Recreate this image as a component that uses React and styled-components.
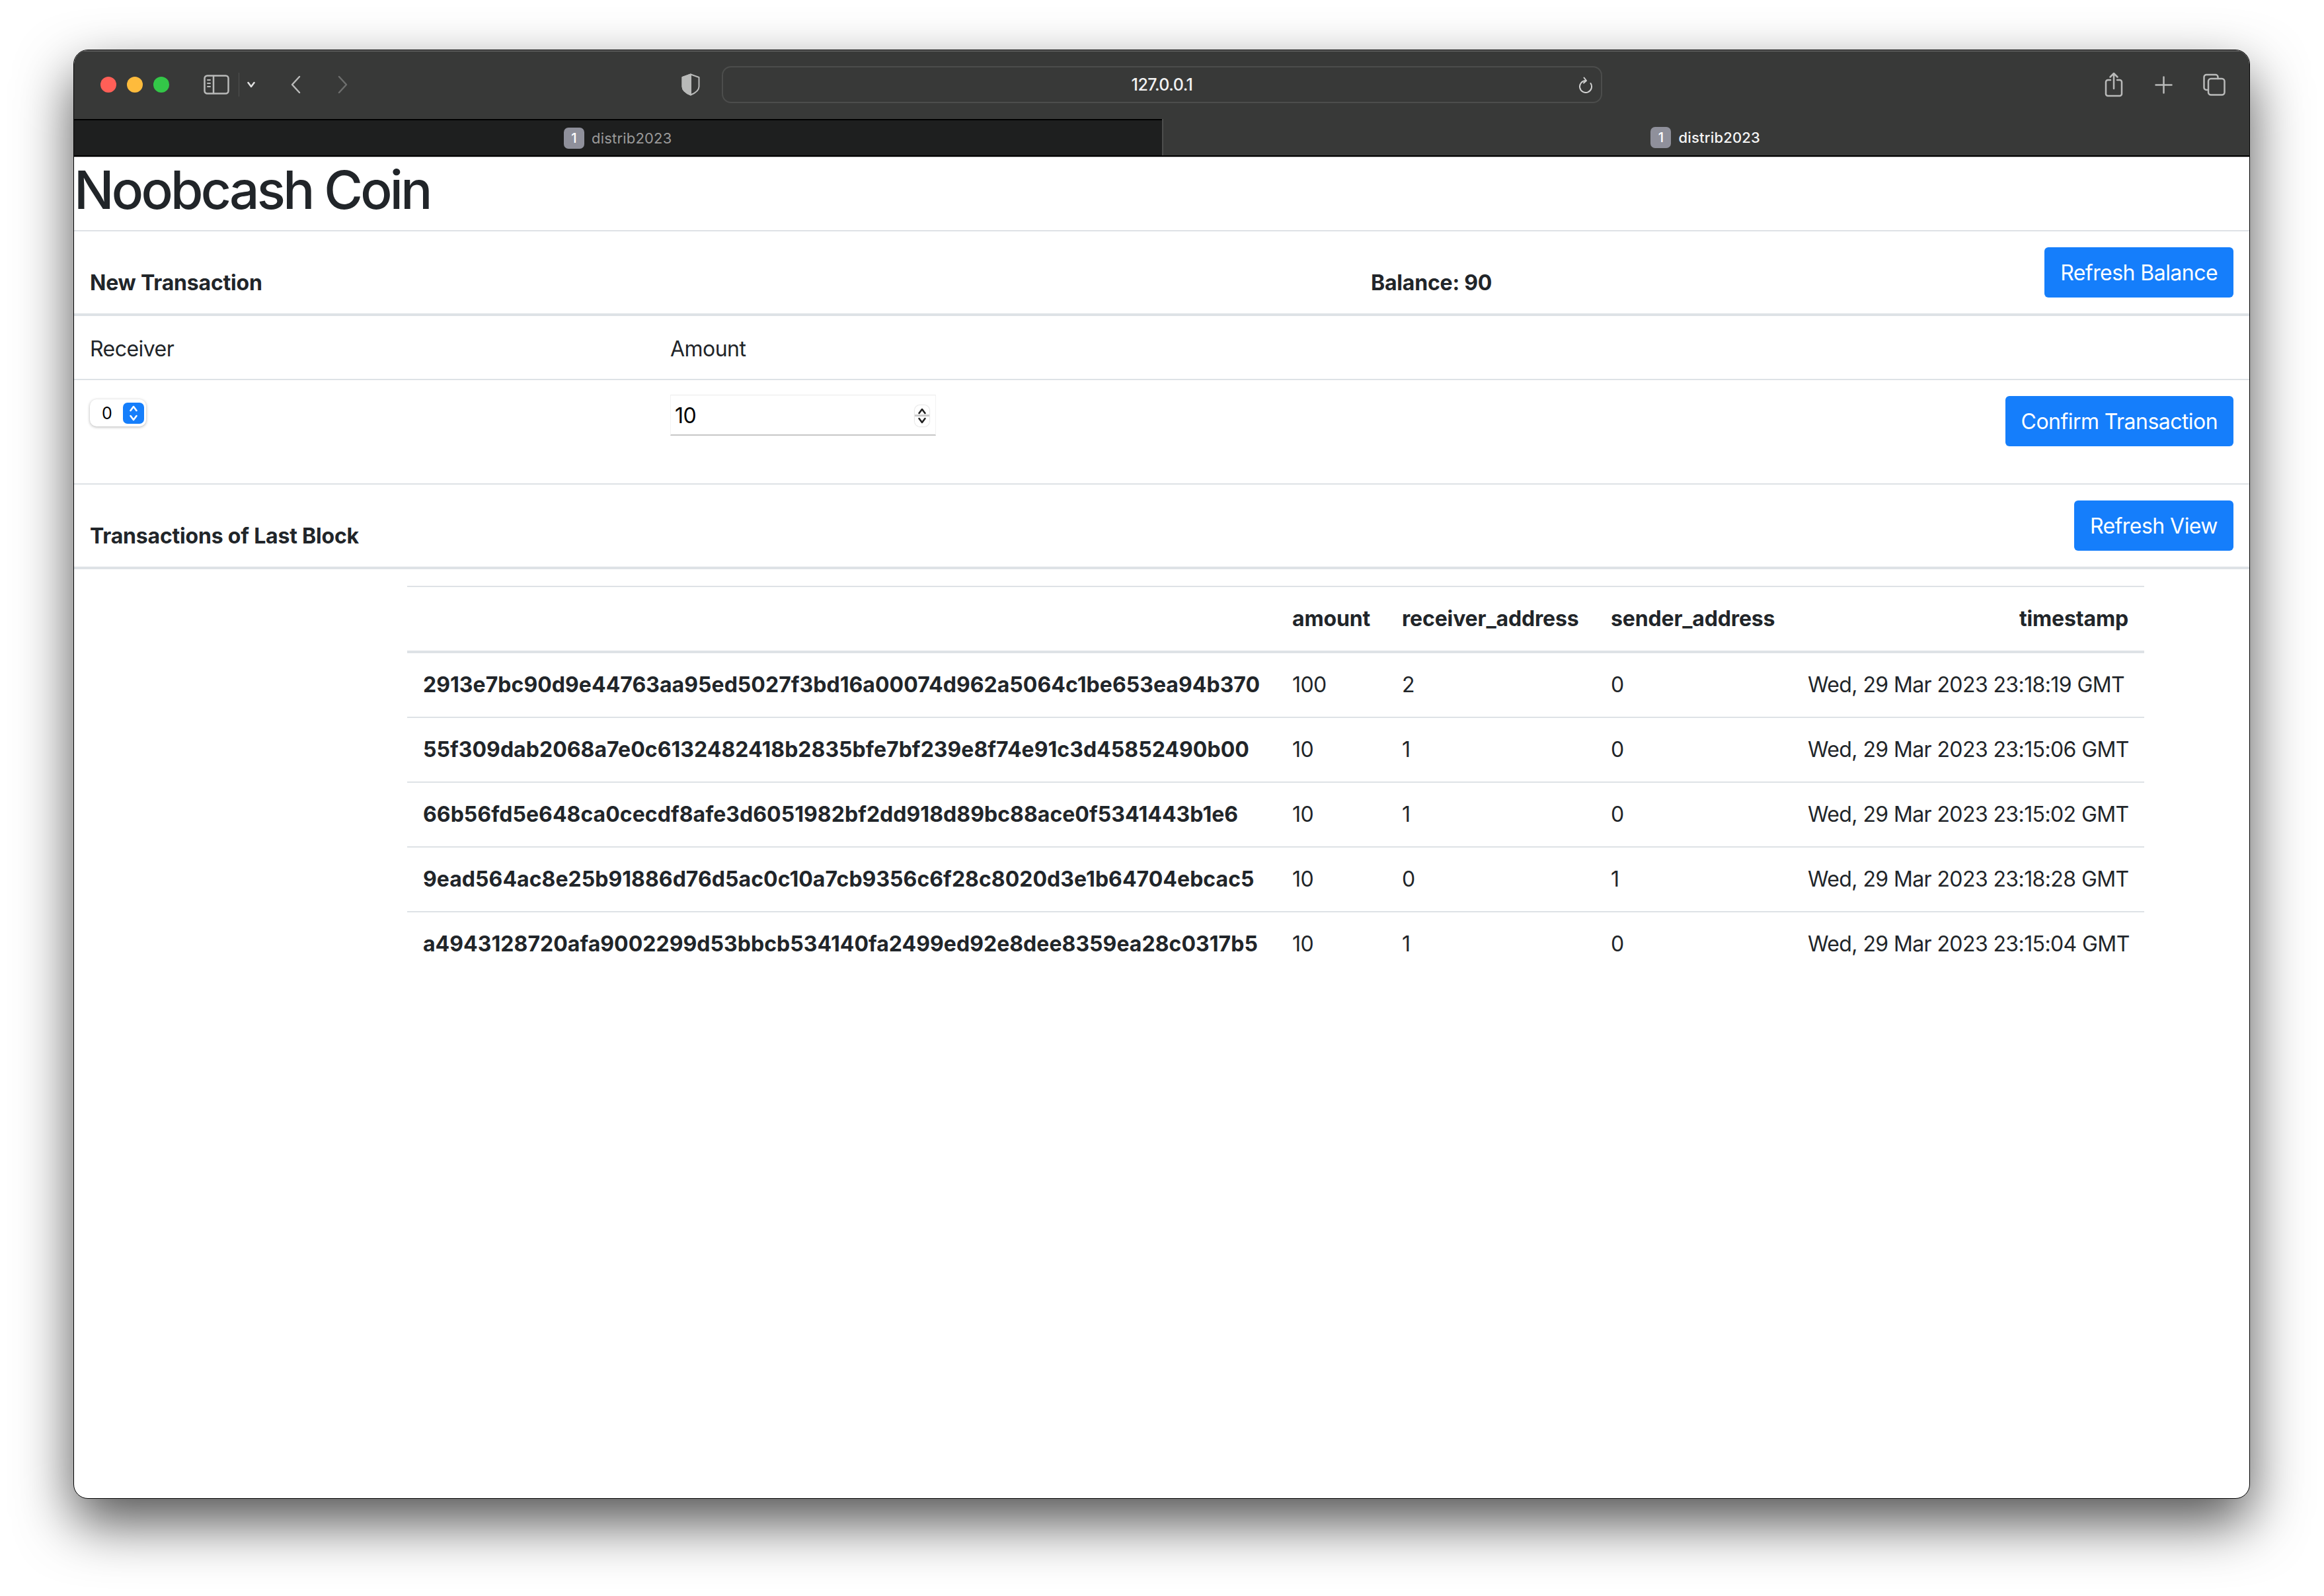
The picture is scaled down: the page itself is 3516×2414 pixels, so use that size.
import styled, { createGlobalStyle } from "styled-components";

const GlobalStyle = createGlobalStyle`
  html, body { margin: 0; padding: 0; background: #fff; }
  body { font-family: Inter, "Liberation Sans", sans-serif; color: #212529; }
  * { box-sizing: border-box; }
`;

const Page = styled.div`
  width: 3516px;
  height: 2414px;
  padding: 75px 0 0 111px;
  overflow: hidden;
`;

const Window = styled.div`
  width: 3293px;
  height: 2192px;
  border: 1px solid #000;
  border-radius: 22px;
  background: #fff;
  overflow: hidden;
  box-shadow: 0 36px 84px rgba(0, 0, 0, 0.68);
`;

const Toolbar = styled.div`
  display: flex;
  align-items: center;
  height: 104px;
  padding-left: 40px;
  background: #383938;
  box-shadow: inset 0 2px 0 #5f5f5f;
`;

const Lights = styled.div`
  display: flex;
  gap: 16px;
`;

const Light = styled.span`
  width: 24px;
  height: 24px;
  border-radius: 50%;
  background: ${(p) => p.$color};
`;

const Icon = styled.svg`
  flex: none;
  display: block;
  margin-left: ${(p) => p.$ml}px;
  fill: none;
  stroke: ${(p) => p.$stroke || "#b9bab9"};
  stroke-width: ${(p) => p.$sw || 2.5};
  stroke-linecap: round;
  stroke-linejoin: round;
`;

const Divider = styled.span`
  flex: none;
  width: 1px;
  height: 36px;
  margin-left: 14px;
  background: #505150;
`;

const UrlBar = styled.div`
  position: relative;
  flex: none;
  display: flex;
  align-items: center;
  justify-content: center;
  width: 1332px;
  height: 56px;
  margin-left: 33px;
  border: 2px solid #4c4d4c;
  border-radius: 14px;
  color: #f2f2f2;
  font-size: 25px;
  font-weight: 500;
  letter-spacing: -0.5px;
`;

const Reload = styled.svg`
  position: absolute;
  right: 12px;
  top: 13px;
  fill: none;
  stroke: #d0d0d0;
  stroke-width: 2;
  stroke-linecap: round;
  stroke-linejoin: round;
`;

const TabBar = styled.div`
  display: flex;
  height: 57px;
  border-bottom: 2px solid #000;
  box-shadow: 0 1px 0 #c8c8c8;
  position: relative;
`;

const Tab = styled.div`
  flex: 1;
  display: flex;
  align-items: center;
  justify-content: center;
  gap: 11px;
  background: ${(p) => (p.$active ? "#383938" : "#1e1f1f")};
  border-top: ${(p) => (p.$active ? "none" : "2px solid #000")};
  box-shadow: ${(p) => (p.$active ? "inset 2px 0 0 #4c4d4c" : "none")};
  color: ${(p) => (p.$active ? "#f4f4f4" : "#9a9a9a")};
  font-size: 22px;
  font-weight: ${(p) => (p.$active ? 500 : 400)};
  letter-spacing: 0.2px;
`;

const TabBadge = styled.span`
  display: flex;
  align-items: center;
  justify-content: center;
  width: 31px;
  height: 32px;
  border-radius: 7px;
  background: #8f909b;
  color: #fff;
  font-size: 20px;
  font-weight: 500;
`;

const Title = styled.h1`
  margin: 2px 0 13px;
  font-size: 80px;
  line-height: 96px;
  font-weight: 500;
  letter-spacing: -3.7px;
`;

const Section = styled.div`
  display: flex;
  align-items: flex-end;
  justify-content: space-between;
  padding: 24px;
  border-top: 2px solid #dee2e6;
  border-bottom: 4px solid #dee2e6;
`;

const SectionTitle = styled.div`
  margin-bottom: -2px;
  font-size: 32px;
  line-height: 48px;
  font-weight: 700;
  letter-spacing: -0.2px;
`;

const Balance = styled(SectionTitle)`
  position: absolute;
  left: 2074px;
`;

const Button = styled.button`
  height: 76px;
  padding: 0 24px;
  border: 0;
  border-radius: 6px;
  background: #157efb;
  color: #fff;
  font-family: inherit;
  font-size: 32px;
  letter-spacing: -0.55px;
`;

const FormRow = styled.div`
  display: grid;
  grid-template-columns: 878px 1fr auto;
  padding: ${(p) => p.$padding};
  border-bottom: ${(p) => (p.$bare ? "none" : "2px solid #dee2e6")};
  font-size: 32px;
  line-height: 48px;
  letter-spacing: -0.55px;
`;

const Select = styled.div`
  display: flex;
  align-items: center;
  justify-content: space-between;
  width: 85px;
  height: 41px;
  margin-top: 5px;
  padding: 0 3px 0 18px;
  border-radius: 10px;
  background: #fff;
  box-shadow: 0 1px 4px rgba(0, 0, 0, 0.3);
  color: #000;
  font-size: 25px;
`;

const SelectStepper = styled.span`
  display: flex;
  width: 32px;
  height: 32px;
  border-radius: 7px;
  background: #157efb;
`;

const NumberBox = styled.div`
  display: flex;
  align-items: center;
  justify-content: space-between;
  width: 402px;
  height: 62px;
  margin-top: -2px;
  padding: 2px 9px 0 6px;
  border-top: 1px solid #e9e9e9;
  border-left: 1px solid #f3f3f3;
  border-right: 1px solid #f3f3f3;
  border-bottom: 2px solid #c6c6c6;
  color: #000;
`;

const NumberStepper = styled.span`
  display: flex;
  width: 22px;
  height: 32px;
  border-radius: 8px;
  background: linear-gradient(#fff 14px, #c9c9c9 14px, #c9c9c9 17px, #fff 17px);
  box-shadow: 0 0 2px rgba(0, 0, 0, 0.35);
`;

const TableWrap = styled.div`
  padding: 25px 0 0 504px;
`;

const Table = styled.table`
  width: 2628px;
  table-layout: fixed;
  border-collapse: collapse;
  font-size: 32px;
  line-height: 48px;
  letter-spacing: -0.6px;
`;

const Col = styled.col`
  width: ${(p) => p.$width}px;
`;

const HeadCell = styled.th`
  padding: 24px;
  border-top: 2px solid #dee2e6;
  border-bottom: 4px solid #dee2e6;
  font-weight: 700;
  letter-spacing: -0.15px;
  white-space: nowrap;
  text-align: ${(p) => p.$align || "left"};
`;

const Row = styled.tr`
  border-bottom: 2px solid #dee2e6;
  &:last-child { border-bottom: 0; }
`;

const HashCell = styled.th`
  padding: 24px;
  font-weight: 700;
  text-align: left;
  white-space: nowrap;
  letter-spacing: 0.04px;
`;

const Cell = styled.td`
  padding: 24px;
  white-space: nowrap;
`;

const rows = [
  ["2913e7bc90d9e44763aa95ed5027f3bd16a00074d962a5064c1be653ea94b370", "100", "2", "0", "Wed, 29 Mar 2023 23:18:19 GMT"],
  ["55f309dab2068a7e0c6132482418b2835bfe7bf239e8f74e91c3d45852490b00", "10", "1", "0", "Wed, 29 Mar 2023 23:15:06 GMT"],
  ["66b56fd5e648ca0cecdf8afe3d6051982bf2dd918d89bc88ace0f5341443b1e6", "10", "1", "0", "Wed, 29 Mar 2023 23:15:02 GMT"],
  ["9ead564ac8e25b91886d76d5ac0c10a7cb9356c6f28c8020d3e1b64704ebcac5", "10", "0", "1", "Wed, 29 Mar 2023 23:18:28 GMT"],
  ["a4943128720afa9002299d53bbcb534140fa2499ed92e8dee8359ea28c0317b5", "10", "1", "0", "Wed, 29 Mar 2023 23:15:04 GMT"],
];

const StepperArrows = ({ width, height, color }) => (
  <svg width={width} height={height} viewBox="0 0 22 32" fill="none" stroke={color} strokeWidth="2.6" strokeLinecap="round" strokeLinejoin="round">
    <path d="M6.500 12l4.500-6 4.500 6M6.500 20l4.500 6 4.500-6" />
  </svg>
);

export default function App() {
  return (
    <Page>
      <GlobalStyle />
      <Window>
        <Toolbar>
          <Lights>
            <Light $color="#ff5f57" />
            <Light $color="#febb3c" />
            <Light $color="#33c748" />
          </Lights>
          <Icon $ml={52} width="39" height="30" viewBox="0 0 39 30">
            <rect x="1.5" y="1.5" width="36" height="27" rx="4" />
            <path d="M15 2v26" />
            <path d="M6 8h4M6 13h4M6 18h4" strokeWidth="2" />
          </Icon>
          <Divider />
          <Icon $ml={12} width="12" height="10" viewBox="0 0 12 10" $stroke="#e0e0e0">
            <path d="M1.5 2L6 8l4.5-6" />
          </Icon>
          <Icon $ml={53} width="16" height="28" viewBox="0 0 16 28">
            <path d="M14 2L3 14l11 12" />
          </Icon>
          <Icon $ml={56} width="16" height="28" viewBox="0 0 16 28" $stroke="#6d6e6d">
            <path d="M2 2l11 12L2 26" />
          </Icon>
          <Icon $ml={504} width="28" height="34" viewBox="0 0 28 34" $sw={2}>
            <path d="M14 1.5L26.5 6v14c0 5-5 9.5-12.5 12.5C6.5 29.5 1.5 25 1.5 20V6z" />
            <path d="M14 1.5V32.5C6.500 29.5 1.5 25 1.5 20V6z" fill="#b9bab9" />
          </Icon>
          <UrlBar>
            127.0.0.1
            <Reload width="22" height="26" viewBox="0 0 22 26">
              <path d="M18.500 11A9 9 0 1 1 11 7" />
              <path d="M8.500 2.500L12 7l-4 3.500" />
            </Reload>
          </UrlBar>
          <Icon $ml={760} width="28" height="38" viewBox="0 0 28 38">
            <path d="M9 12H5a3 3 0 0 0-3 3v18a3 3 0 0 0 3 3h18a3 3 0 0 0 3-3V15a3 3 0 0 0-3-3h-4" />
            <path d="M14 25V2M8.500 7.500L14 2l5.500 5.500" />
          </Icon>
          <Icon $ml={48} width="27" height="27" viewBox="0 0 27 27">
            <path d="M13.500 1.500v24M1.500 13.500h24" />
          </Icon>
          <Icon $ml={46} width="34" height="34" viewBox="0 0 34 34">
            <path d="M6 25H5a3.500 3.500 0 0 1-3.500-3.500v-16A3.500 3.500 0 0 1 5 2h14a3.500 3.500 0 0 1 3.500 3.500V8" />
            <rect x="8" y="8" width="24.500" height="24.500" rx="4" />
          </Icon>
        </Toolbar>
        <TabBar>
          <Tab>
            <TabBadge>1</TabBadge>
            distrib2023
          </Tab>
          <Tab $active>
            <TabBadge>1</TabBadge>
            distrib2023
          </Tab>
        </TabBar>
        <Title>Noobcash Coin</Title>
        <Section>
          <SectionTitle>New Transaction</SectionTitle>
          <Balance>Balance: 90</Balance>
          <Button>Refresh Balance</Button>
        </Section>
        <FormRow $padding="26px 24px 21px">
          <div>Receiver</div>
          <div>Amount</div>
        </FormRow>
        <FormRow $bare $padding="24px 24px 56px">
          <div>
            <Select>
              0
              <SelectStepper>
                <StepperArrows width={32} height={32} color="#fff" />
              </SelectStepper>
            </Select>
          </div>
          <NumberBox>
            10
            <NumberStepper>
              <StepperArrows width={22} height={32} color="#222" />
            </NumberStepper>
          </NumberBox>
          <Button>Confirm Transaction</Button>
        </FormRow>
        <Section>
          <SectionTitle>Transactions of Last Block</SectionTitle>
          <Button>Refresh View</Button>
        </Section>
        <TableWrap>
          <Table>
            <colgroup>
              <Col $width={1315} />
              <Col $width={166} />
              <Col $width={316} />
              <Col $width={298} />
              <Col $width={533} />
            </colgroup>
            <thead>
              <tr>
                <HeadCell />
                <HeadCell>amount</HeadCell>
                <HeadCell>receiver_address</HeadCell>
                <HeadCell>sender_address</HeadCell>
                <HeadCell $align="right">timestamp</HeadCell>
              </tr>
            </thead>
            <tbody>
              {rows.map((r) => (
                <Row key={r[0]}>
                  <HashCell>{r[0]}</HashCell>
                  <Cell>{r[1]}</Cell>
                  <Cell>{r[2]}</Cell>
                  <Cell>{r[3]}</Cell>
                  <Cell>{r[4]}</Cell>
                </Row>
              ))}
            </tbody>
          </Table>
        </TableWrap>
      </Window>
    </Page>
  );
}
